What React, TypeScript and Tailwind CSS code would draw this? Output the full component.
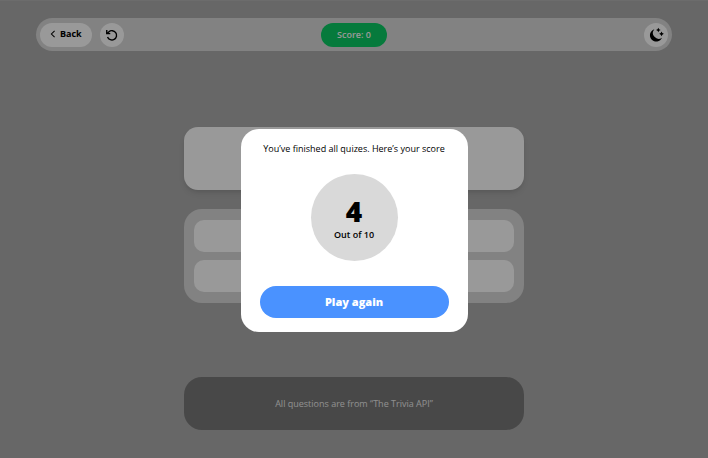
import React from "react";

const answers = ["First answer", "Second answer"];

function RestartIcon() {
  return (
    <svg viewBox="0 0 24 24" className="size-3.5" fill="none" stroke="currentColor" strokeWidth="2.4" aria-hidden="true">
      <path d="M4.4 15.5 a8 8 0 1 0 2 -8.8 L3.6 9.2" />
      <path d="M3 3.6 V9.6 H9" />
    </svg>
  );
}

function MoonIcon() {
  return (
    <svg viewBox="0 0 24 24" className="size-4" fill="currentColor" aria-hidden="true">
      <path d="M9.5 3.4 A9.4 9.4 0 1 0 21 16 A8.6 8.6 0 0 1 9.5 3.4 Z" />
      <path d="M15.5 1 L16.7 3.3 L19 4.5 L16.7 5.7 L15.5 8 L14.3 5.7 L12 4.5 L14.3 3.3 Z" />
      <path d="M20.3 6.8 L21.5 9.1 L23.8 10.3 L21.5 11.5 L20.3 13.8 L19.1 11.5 L16.8 10.3 L19.1 9.1 Z" />
    </svg>
  );
}

function Header() {
  return (
    <header className="mx-9 grid h-[33px] grid-cols-[1fr_auto_1fr] items-center rounded-full bg-[#d9d9d9] px-1">
      <div className="flex items-center gap-2">
        <button className="flex h-6 items-center gap-1 rounded-full bg-white px-2.5 pb-px text-[9px] font-bold">
          <svg viewBox="0 0 6 10" className="h-2 w-1.5" fill="none" stroke="currentColor" strokeWidth="1.3" aria-hidden="true">
            <path d="M5 1 L1 5 L5 9" />
          </svg>
          Back
        </button>
        <button aria-label="Restart" className="flex size-6 items-center justify-center rounded-full bg-white">
          <RestartIcon />
        </button>
      </div>
      <p className="flex h-6 items-center rounded-full bg-[#0acc64] px-4 text-[9px] font-semibold text-white">Score: 0</p>
      <button aria-label="Dark mode" className="flex size-6 items-center justify-center justify-self-end rounded-full bg-white">
        <MoonIcon />
      </button>
    </header>
  );
}

function ResultDialog() {
  return (
    <div className="fixed inset-0 flex items-center justify-center bg-black/40 pt-0.5">
      <div role="dialog" aria-modal="true" className="flex w-[227px] flex-col items-center rounded-[18px] bg-white px-[19px] py-3.5">
        <p className="text-[9px] leading-3 font-medium whitespace-nowrap">You’ve finished all quizes. Here’s your score</p>
        <div className="mt-[19px] flex size-[87px] flex-col items-center justify-center rounded-full bg-[#d9d9d9] pt-1">
          <strong className="text-[28px] leading-8 font-black">4</strong>
          <span className="text-[9px] leading-4 font-semibold">Out of 10</span>
        </div>
        <button className="mt-[25px] h-8 w-full rounded-full bg-[#4a92ff] pt-px text-[11px] font-extrabold text-white">Play again</button>
      </div>
    </div>
  );
}

export default function App() {
  return (
    <div className="min-h-screen border-t border-[#b4b4b4] bg-[#acacac] pt-[17px] pb-7 font-['Open_Sans',sans-serif] text-black">
      <Header />
      <main className="mx-auto w-[48%]">
        <section aria-label="Question" className="mt-[76px] h-[63px] rounded-[14px] bg-white shadow-md" />
        <section aria-label="Answers" className="mt-[19px] flex flex-col gap-2 rounded-[18px] bg-[#d9d9d9] px-2.5 py-[11px]">
          {answers.map((answer) => (
            <button key={answer} aria-label={answer} className="h-8 rounded-[10px] bg-white" />
          ))}
        </section>
        <footer className="mt-[74px] flex h-[53px] items-center justify-center rounded-[18px] bg-[#787878] text-[9px] font-medium text-[#eeeeee]">
          All questions are from “The Trivia API”
        </footer>
      </main>
      <ResultDialog />
    </div>
  );
}
